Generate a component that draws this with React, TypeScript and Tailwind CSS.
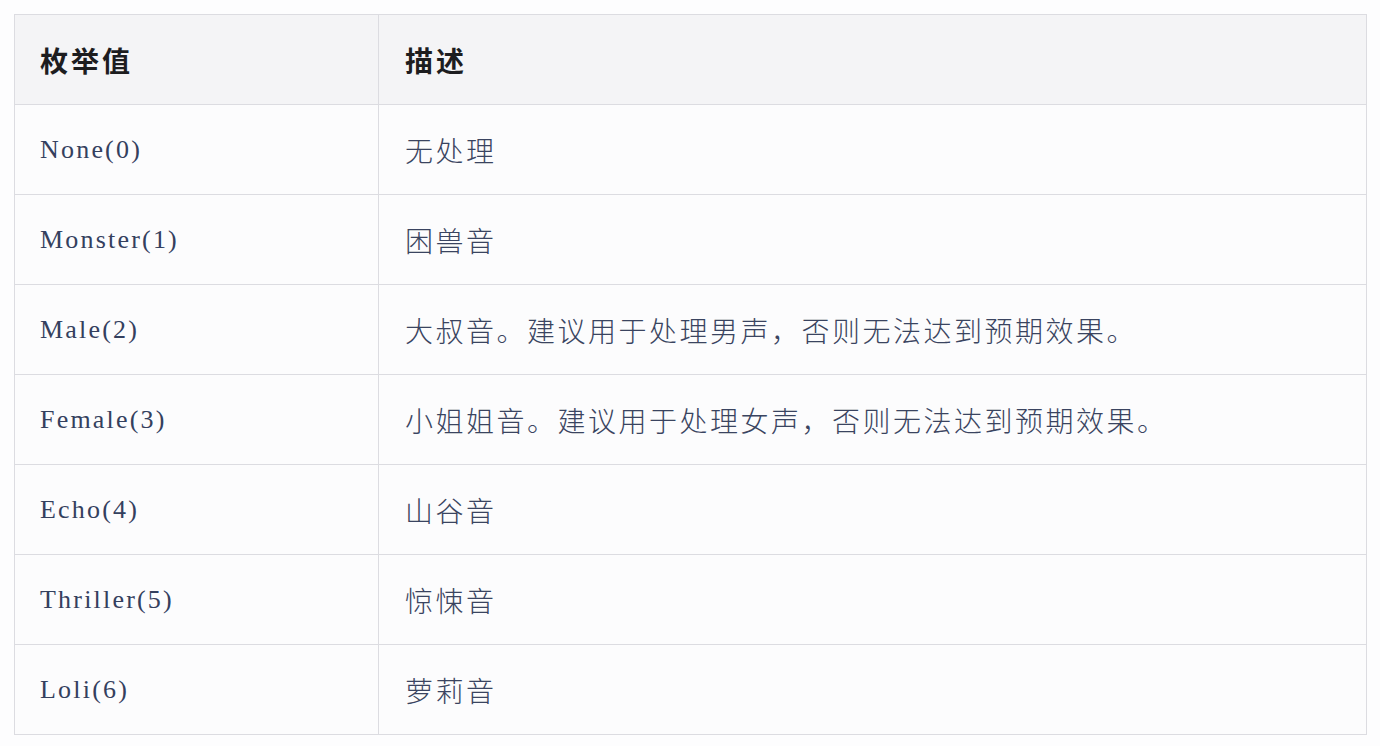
const rows: [string, string][] = [
  ["None(0)", "无处理"],
  ["Monster(1)", "困兽音"],
  ["Male(2)", "大叔音。建议用于处理男声，否则无法达到预期效果。"],
  ["Female(3)", "小姐姐音。建议用于处理女声，否则无法达到预期效果。"],
  ["Echo(4)", "山谷音"],
  ["Thriller(5)", "惊悚音"],
  ["Loli(6)", "萝莉音"],
];

export default function App() {
  return (
    <div className="w-[1380px] h-[746px] bg-[#fdfdfe] pt-[14px] pl-[14px]">
      <table className="w-[1353px] border-collapse table-fixed">
        <colgroup>
          <col className="w-[364px]" />
          <col />
        </colgroup>
        <thead>
          <tr className="h-[90px] bg-[#f4f4f6]">
            {["枚举值", "描述"].map((h, i) => (
              <th
                key={h}
                className={`border border-[#dcdce1] text-left font-bold text-[28px] tracking-[3px] text-[#1d1d1f] font-['Noto_Sans_CJK_SC',sans-serif] ${i === 0 ? "pl-[25px]" : "pl-[26px]"}`}
              >
                {h}
              </th>
            ))}
          </tr>
        </thead>
        <tbody>
          {rows.map(([k, v]) => (
            <tr key={k} className="h-[90px] bg-[#fcfcfd]">
              <td className="border border-[#dcdce1] pl-[25px] text-[26px] tracking-[2.2px] text-[#34405e] font-['Liberation_Serif',serif]">
                {k}
              </td>
              <td className="border border-[#dcdce1] pl-[26px] text-[28px] tracking-[2.5px] font-light text-[#3a4460] font-['Noto_Sans_CJK_SC',sans-serif]">
                {v}
              </td>
            </tr>
          ))}
        </tbody>
      </table>
    </div>
  );
}
